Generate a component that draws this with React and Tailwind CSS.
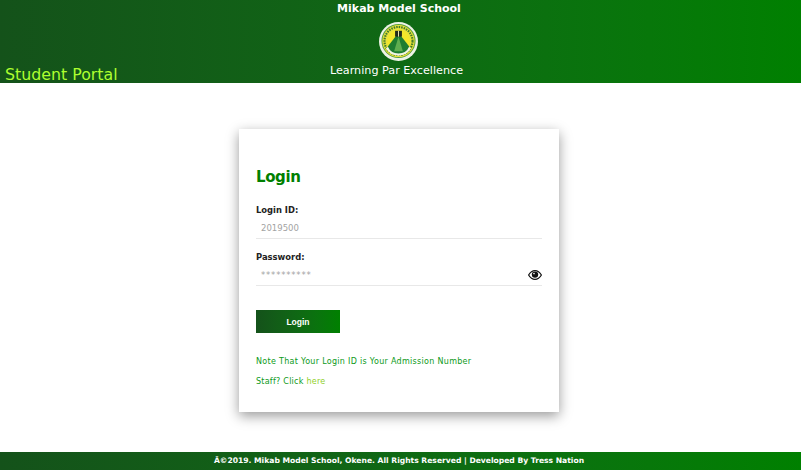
const Logo = () => (
  <svg width="39" height="39" viewBox="0 0 40 40" className="block">
    <circle cx="20" cy="20" r="20" fill="#eef3e6" />
    <circle cx="20" cy="19.5" r="17.5" fill="#5aa03c" />
    <circle cx="20" cy="19.5" r="16.5" fill="#e9e23a" />
    <circle cx="20" cy="19.5" r="14.4" fill="none" stroke="#3f7a2c" strokeWidth="2.2" strokeDasharray="1.6 1" />
    <path d="M7 27 A15 15 0 0 0 33 27 L30 25 A12 12 0 0 1 10 25 Z" fill="#f3f5e4" />
    <circle cx="20" cy="19.5" r="11.5" fill="#f2e62a" />
    <path d="M20 11 L31 25 A12 12 0 0 1 9 25 Z" fill="#1e7d30" />
    <path d="M20 15 L24.5 30 L15.5 30 Z" fill="#5fae50" />
    <rect x="16.5" y="9" width="7" height="6" fill="#1f2a1c" />
    <rect x="19.5" y="9" width="1" height="6" fill="#e9e6b0" />
  </svg>
);

const EyeIcon = () => (
  <svg width="14" height="10" viewBox="0 0 14 10" className="block">
    <path d="M0.6 5 C2.4 1.9 4.6 0.6 7 0.6 C9.4 0.6 11.6 1.9 13.4 5 C11.6 8.1 9.4 9.4 7 9.4 C4.6 9.4 2.4 8.1 0.6 5 Z" fill="none" stroke="#111" strokeWidth="1.2" />
    <circle cx="7" cy="4.6" r="3.2" fill="#111" />
    <circle cx="6" cy="3.6" r="0.8" fill="#fff" />
  </svg>
);

const Field = ({ label, value, type = 'text', children }) => (
  <div>
    <label className="block text-[8.4px] leading-[11px] font-bold text-[#222]">{label}</label>
    <div className="mt-[3px] flex h-[20px] items-center justify-between border-b border-[#e8e8e8] pb-[1px] pl-[5px]">
      <input
        type={type}
        placeholder={value}
        className={
          type === 'password'
            ? 'w-[200px] text-[8.5px] tracking-[0.8px] outline-none placeholder:text-[#a3a3a3]'
            : 'w-[200px] text-[8.5px] outline-none placeholder:text-[#a3a3a3]'
        }
      />
      {children}
    </div>
  </div>
);

export default function App() {
  return (
    <div className="flex h-[471px] w-full flex-col overflow-hidden bg-white font-['DejaVu_Sans',Verdana,sans-serif]">
      {/* Header */}
      <header className="grid h-[83px] grid-cols-[1fr_auto_1fr] bg-gradient-to-r from-[#14521a] to-[#008000] pr-[3px]">
        <div className="flex items-end pl-[5px]">
          <span className="translate-y-[1px] text-[15.8px] leading-[19px] text-[#adff2f]">Student Portal</span>
        </div>
        <div className="flex flex-col items-center">
          <h1 className="mt-[2px] text-[11px] leading-[13px] font-bold text-white">Mikab Model School</h1>
          <div className="mt-[7px]">
            <Logo />
          </div>
          <p className="mt-[3px] mr-[5px] text-[11.2px] leading-[13px] text-white">Learning Par Excellence</p>
        </div>
        <div />
      </header>

      {/* Login card */}
      <main className="flex flex-1 justify-center pt-[46px] pr-[3px]">
        <div className="h-[283px] w-[320px] bg-white pt-[39px] pr-[17px] pl-[17px] shadow-[0_4px_12px_rgba(0,0,0,0.4)]">
          <h2 className="text-[15px] leading-[19px] font-bold tracking-[-0.4px] text-[#008000]">Login</h2>
          <div className="mt-[18px] flex flex-col gap-[13px]">
            <Field label="Login ID:" value="2019500" />
            <Field label="Password:" value="**********" type="password">
              <EyeIcon />
            </Field>
          </div>
          <button className="mt-[24px] block h-[23px] w-[84px] bg-gradient-to-r from-[#14521a] to-[#008000] pt-[1px] text-center font-['Liberation_Sans',Arial,sans-serif] text-[8.5px] font-bold text-white">
            Login
          </button>
          <p className="mt-[24px] text-[8px] leading-[10px] tracking-[0.3px] text-[#0c9a20]">Note That Your Login ID is Your Admission Number</p>
          <p className="mt-[10px] text-[8px] leading-[10px] tracking-[0.25px] text-[#0c9a20]">
            Staff? Click <a className="text-[#8fd02a]">here</a>
          </p>
        </div>
      </main>

      {/* Footer */}
      <footer className="flex h-[18px] items-center justify-center bg-gradient-to-r from-[#14521a] to-[#008000] pr-[3px] text-[7.6px] font-bold text-white">
        Â©2019. Mikab Model School, Okene. All Rights Reserved | Developed By Tress Nation
      </footer>
      <div className="h-px bg-white" />
    </div>
  );
}
